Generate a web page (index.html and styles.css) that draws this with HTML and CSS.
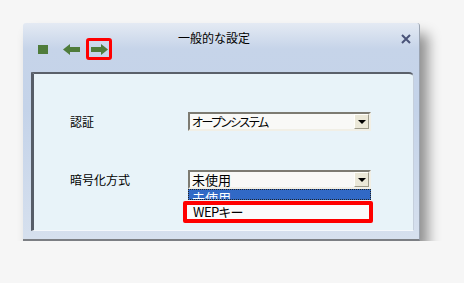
FILE: index.html
```
<!DOCTYPE html>
<html lang="ja">
<head>
  <meta charset="UTF-8">
  <title>一般的な設定</title>
  <link rel="stylesheet" href="styles.css">
</head>
<body>
  <div class="page">
    <div class="dialog">
      <div class="titlebar">
        <div class="tools">
          <svg class="stop" width="10" height="9" viewBox="0 0 10 9"><rect width="10" height="9" fill="#4f7c3b"/></svg>
          <svg class="arrow" width="17" height="11" viewBox="0 0 17 11"><path d="M0 5.5 L7 0 L7 3 L17 3 L17 8 L7 8 L7 11 Z" fill="#4f7c3b"/></svg>
          <span class="hl">
            <svg class="arrow" width="17" height="11" viewBox="0 0 17 11"><path d="M17 5.5 L10 0 L10 3 L0 3 L0 8 L10 8 L10 11 Z" fill="#4f7c3b"/></svg>
          </span>
        </div>
        <div class="title">一般的な設定</div>
        <svg class="close" width="10" height="10" viewBox="0 0 10 10"><path d="M1 1 L9 9 M9 1 L1 9" stroke="#4a5378" stroke-width="2"/></svg>
      </div>
      <div class="panel">
        <div class="form">
          <div class="label">認証</div>
          <div class="select">
            <span class="value kana">オープンシステム</span>
            <span class="btn"></span>
          </div>
          <div class="label">暗号化方式</div>
          <div class="combo">
            <div class="select">
              <span class="value">未使用</span>
              <span class="btn"></span>
            </div>
            <ul class="list">
              <li class="sel">未使用</li>
              <li class="mark">WEPキー</li>
            </ul>
          </div>
        </div>
      </div>
    </div>
  </div>
</body>
</html>
```
FILE: styles.css
```
body {
  margin: 0;
  background: #f6f6f6;
  font-family: "Noto Sans CJK JP", sans-serif;
  color: #000;
}

.page {
  padding: 23px 0 0 23px;
}

.dialog {
  width: 396px;
  height: 216px;
  display: flex;
  flex-direction: column;
  background: linear-gradient(#e4eaf3, #c6d4e9 12%, #c4d3e9 40%, #d6e0ee);
  border-right: 1px solid #9aa3b0;
  border-bottom: 2px solid #7c7f84;
  border-radius: 3px 3px 0 0;
  box-shadow: 8px 11px 13px rgba(0, 0, 0, 0.42);
}

.titlebar {
  height: 49px;
  display: flex;
  align-items: flex-start;
}

.tools {
  display: flex;
  align-items: center;
  margin: 15px 0 0 15px;
}

.arrow {
  margin-left: 15px;
}

.hl {
  display: flex;
  align-items: center;
  justify-content: center;
  width: 20px;
  height: 16px;
  margin-left: 6px;
  border: 3px solid #f00;
  border-radius: 3px;
}

.hl .arrow {
  margin: 0;
}

.title {
  margin: 7px 0 0 66px;
  font-size: 12px;
  line-height: 16px;
}

.close {
  margin: 11px 0 0 auto;
  margin-right: 8px;
}

.panel {
  flex: 1;
  margin: 0 5px 8px 8px;
  background: #e8f3f9;
  border-top: 2px solid #5a606a;
  border-left: 3px solid #565d68;
  border-right: 1px solid #c5cfdc;
  border-bottom: 1px solid #f4f8fc;
  border-radius: 0 5px 0 0;
}

.form {
  display: grid;
  grid-template-columns: 118px 183px;
  row-gap: 39px;
  align-items: center;
  padding: 38px 0 0 36px;
}

.label {
  font-size: 12px;
}

.combo {
  position: relative;
}

.select {
  height: 15px;
  display: flex;
  align-items: center;
  background: #f9f9f7;
  border: 2px solid;
  border-color: #7d7b72 #f1efe6 #f1efe6 #7d7b72;
}

.value {
  flex: 1;
  padding-left: 2px;
  font-size: 13px;
  line-height: 15px;
  white-space: nowrap;
  overflow: hidden;
}

.value.kana {
  font-size: 12px;
  letter-spacing: -1.5px;
  font-feature-settings: "palt";
}

.btn {
  width: 15px;
  height: 15px;
  box-sizing: border-box;
  background: #ebe8d8;
  border: 1px solid;
  border-color: #fffffb #9d9a8a #9d9a8a #fffffb;
  position: relative;
}

.btn::after {
  content: "";
  position: absolute;
  left: 3px;
  top: 5px;
  border-left: 4px solid transparent;
  border-right: 4px solid transparent;
  border-top: 4px solid #000;
}

.list {
  position: absolute;
  left: 0;
  right: 0;
  top: 19px;
  margin: 0;
  padding: 0;
  list-style: none;
  font-size: 13px;
}

.list .sel {
  height: 9px;
  line-height: 15px;
  overflow: hidden;
  padding-left: 3px;
  background: #3169c6;
  color: #fff;
  border: 1px dotted #222;
}

.list .mark {
  height: 14px;
  line-height: 14px;
  margin: 1px -2px 0 -5px;
  padding-left: 6px;
  background: #fbfbfb;
  border: 4px solid #f00;
  border-radius: 2px;
  letter-spacing: -0.5px;
  font-feature-settings: "palt";
}
```
